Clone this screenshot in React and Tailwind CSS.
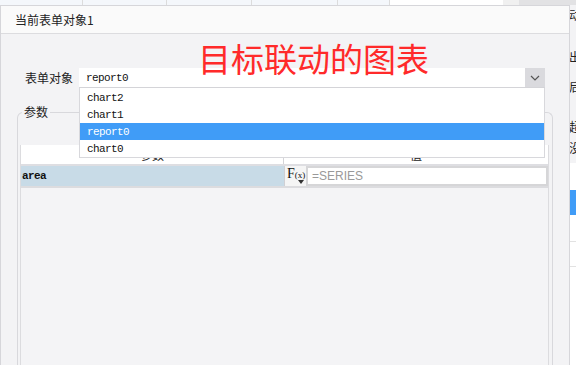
import React from 'react';

const cjk = "font-['Noto_Sans_CJK_SC','Noto_Sans',sans-serif]";
const mono = "font-['Liberation_Mono','DejaVu_Sans_Mono',monospace]";

// ── Options in the open combo list ─────────────────────────────────────
const options = ['chart2', 'chart1', 'report0', 'chart0'];

function Chevron() {
  return (
    <svg width="10" height="6" viewBox="0 0 10 6" fill="none">
      <path d="M1 1 L5 5 L9 1" stroke="#555" strokeWidth="1.2" />
    </svg>
  );
}

function TopTabs() {
  return (
    <div className="flex h-[5px] w-full bg-[#f4f7fb]">
      <div className="w-[83px] border-r border-[#dcdcdc]" />
      <div className="w-[84px] border-r border-[#dcdcdc]" />
      <div className="w-[85px] border-r border-[#dcdcdc]" />
      <div className="w-[86px] border-r border-[#dcdcdc]" />
      <div className="w-[52px] border-r border-[#dcdcdc]" />
      <div className="w-[113px] bg-white" />
      <div className="w-[16px] bg-[#f0f0f0]" />
      <div className="flex-1 bg-[#e2e2e4]" />
    </div>
  );
}

function SideStrip() {
  return (
    <div className={`w-[6px] flex flex-col overflow-hidden bg-[#f3f3f5] text-[12px] text-[#222] ${cjk}`}>
      <div className="h-[158px] shrink-0 flex flex-col leading-[16px] -ml-px">
        <span className="mt-[2px]">动</span>
        <span className="mt-[26px]">出</span>
        <span className="mt-[14px]">后</span>
        <span className="mt-[24px]">超</span>
        <span className="mt-[5px]">没</span>
      </div>
      <div className="flex-1 bg-white flex flex-col">
        <div className="h-[27px]" />
        <div className="h-[25px] bg-[#409cf7]" />
        <div className="h-[27px] border-b border-[#e2e2e2]" />
        <div className="h-[25px] border-b border-[#e2e2e2]" />
      </div>
    </div>
  );
}

export default function App() {
  return (
    <div className={`w-[576px] h-[365px] overflow-hidden flex flex-col bg-[#f3f3f5] ${cjk}`}>
      <TopTabs />
      <div className="flex flex-1 min-h-0">
        {/* ── Dialog ─────────────────────────────────────────────────── */}
        <div className="w-[570px] flex flex-col border-l border-r border-t border-[#d6d6da] bg-[#f3f3f5]">
          <div className="h-[28px] shrink-0 flex items-center pl-[14px] bg-[#fafafa] border-b border-[#dcdcdf] text-[12px] text-[#222]">
            当前表单对象1
          </div>

          <div className="relative flex-1 flex flex-col">
            {/* Title overlay */}
            <div className="absolute left-[197px] top-[4px] text-[33px] leading-[40px] text-[#ff2a2a] whitespace-nowrap">
              目标联动的图表
            </div>

            {/* Form object row */}
            <div className="mt-[34px] h-[20px] flex items-center">
              <span className="pl-[24px] w-[78px] text-[12px] text-[#222]">表单对象</span>
              <div className="w-[466px] h-[20px] flex bg-white border-b border-[#d4d4d8]">
                <span className={`flex-1 pl-[7px] text-[11px] tracking-[-0.6px] leading-[20px] text-[#111] ${mono}`}>report0</span>
                <div className="w-[20px] bg-[#dadade] flex items-center justify-center">
                  <Chevron />
                </div>
              </div>
            </div>

            {/* Open list */}
            <div className="absolute left-[78px] top-[54px] w-[466px] pt-px bg-white border border-t-0 border-[#d8d8dc] z-10">
              {options.map((o) => (
                <div
                  key={o}
                  className={`h-[17px] pl-[7px] text-[11px] tracking-[-0.6px] leading-[18px] ${mono} ${
                    o === 'report0' ? 'bg-[#409cf7] text-white' : 'text-[#111]'
                  }`}
                >
                  {o}
                </div>
              ))}
            </div>

            {/* Parameter group */}
            <div className="relative mt-[24px] ml-[16px] w-[536px] flex-1 border border-b-0 border-[#d8d8dc] rounded-t-[6px] pt-[32px] pl-[2px]">
              <span className="absolute left-[4px] top-[-9px] px-[2px] bg-[#f3f3f5] text-[12px] leading-[16px] text-[#222]">
                参数
              </span>

              <div className="w-[529px] h-full flex flex-col border-l border-r border-[#dcdcdf]">
                {/* Header */}
                <div className="h-[21px] shrink-0 flex bg-white border-b-2 border-[#dedee2] text-[12px] text-[#222]">
                  <div className="w-[263px] text-center leading-[20px] border-r border-[#d4d4d8]">参数</div>
                  <div className="flex-1 text-center leading-[20px]">值</div>
                </div>
                {/* Row */}
                <div className="h-[22px] shrink-0 flex border-b-2 border-[#dcdcdf]">
                  <div className={`w-[263px] bg-[#c8dbe7] pl-[1px] text-[11px] tracking-[-0.6px] font-bold leading-[21px] text-[#111] ${mono}`}>
                    area
                  </div>
                  <div className="relative w-[22px] bg-[#f5f5f5] border-l border-[#d0d0d4] flex items-start pl-[2px] pt-[1px]">
                    <span className="font-['Liberation_Serif',serif] text-[14px] leading-[14px] text-[#111]">F</span>
                    <span className="font-['Liberation_Serif',serif] text-[9px] leading-[14px] text-[#111] mt-[1px]">(x)</span>
                    <svg className="absolute left-[13px] bottom-[2px]" width="6" height="4" viewBox="0 0 6 4">
                      <path d="M0 0 H6 L3 4 Z" fill="#333" />
                    </svg>
                  </div>
                  <div className="flex-1 bg-white border-2 border-[#d6d6d8] pl-[4px] font-['Liberation_Sans',sans-serif] text-[12px] leading-[16px] text-[#999]">
                    =SERIES
                  </div>
                </div>
                <div className="flex-1 bg-[#f4f4f6]" />
              </div>
            </div>
          </div>
        </div>

        <SideStrip />
      </div>
    </div>
  );
}
